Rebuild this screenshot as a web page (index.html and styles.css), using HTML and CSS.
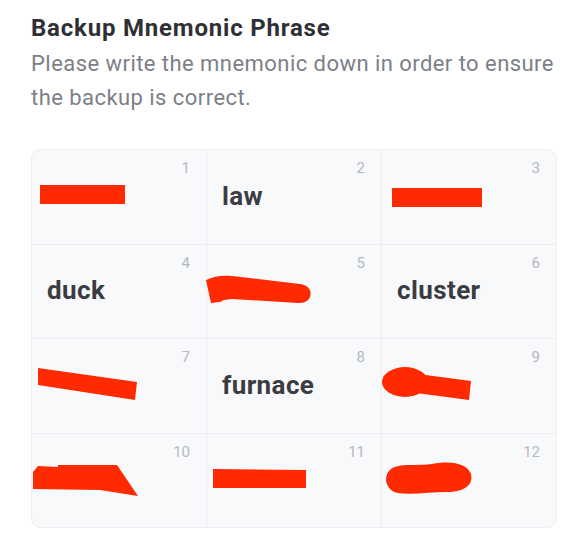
FILE: index.html
```html
<!DOCTYPE html>
<html lang="en">
<head>
<meta charset="utf-8">
<title>Backup Mnemonic Phrase</title>
<link rel="stylesheet" href="styles.css">
</head>
<body>
<main class="page">
  <h1 class="title">Backup Mnemonic Phrase</h1>
  <p class="subtitle">Please write the mnemonic down in order to ensure the backup is correct.</p>
  <div class="card-wrap">
    <div class="grid">
      <div class="cell"><span class="num">1</span><span class="word"></span></div>
      <div class="cell"><span class="num">2</span><span class="word">law</span></div>
      <div class="cell"><span class="num">3</span><span class="word"></span></div>
      <div class="cell"><span class="num">4</span><span class="word">duck</span></div>
      <div class="cell"><span class="num">5</span><span class="word"></span></div>
      <div class="cell"><span class="num">6</span><span class="word">cluster</span></div>
      <div class="cell"><span class="num">7</span><span class="word"></span></div>
      <div class="cell"><span class="num">8</span><span class="word">furnace</span></div>
      <div class="cell"><span class="num">9</span><span class="word"></span></div>
      <div class="cell"><span class="num">10</span><span class="word"></span></div>
      <div class="cell"><span class="num">11</span><span class="word"></span></div>
      <div class="cell"><span class="num">12</span><span class="word"></span></div>
    </div>
    <svg class="redact" viewBox="31 149 526 378" width="526" height="378" aria-hidden="true">
      <g fill="#ff2a00">
        <rect x="40" y="185" width="85" height="19"/>
        <rect x="392" y="188" width="90" height="19"/>
        <path d="M206 280 C214 276 222 275 232 276 L300 284 C309 285 312 291 310 297 C308 302 303 303 298 303 L232 299 L224 300 L220 302 L211 303 L209 294 Z"/>
        <polygon points="38,368 137,382 135,400 38,385"/>
        <ellipse cx="405" cy="382" rx="23" ry="15"/>
        <polygon points="418,374 471,381 469,400 416,393"/>
        <polygon points="33,472 38,466 58,467 58,465 117,465 138,496 100,490 33,489"/>
        <polygon points="213,469 306,470 306,488 213,488"/>
        <path d="M391 469 C398 463 420 466 432 464 C448 461 466 462 471 474 C474 486 462 492 448 492 C430 492 412 495 398 493 C386 491 382 476 391 469 Z"/>
      </g>
    </svg>
  </div>
</main>
</body>
</html>
```
FILE: styles.css
```css
* { box-sizing: border-box; }
html, body { margin: 0; padding: 0; background: #ffffff; }
body { font-family: Roboto, "Noto Sans", "Liberation Sans", sans-serif; }
.page { padding: 14px 20px 0 31px; }
.title {
  margin: 0;
  font-size: 24px;
  line-height: 28px;
  font-weight: 700;
  letter-spacing: 0.8px;
  color: #2f3036;
}
.subtitle {
  margin: 5px 0 0;
  font-size: 22px;
  line-height: 34px;
  font-weight: 400;
  letter-spacing: 0.45px;
  color: #7c7f87;
}
.card-wrap {
  position: relative;
  margin-top: 34px;
  width: 526px;
}
.grid {
  display: grid;
  grid-template-columns: repeat(3, 174px);
  grid-auto-rows: 93.5px;
  gap: 1px;
  background: #eceef1;
  border: 1px solid #eceef1;
  border-radius: 10px;
  overflow: hidden;
}
.cell {
  position: relative;
  display: flex;
  align-items: center;
  padding: 0 14px 2px 15px;
  background: #f8f9fb;
}
.num {
  position: absolute;
  top: 9px;
  right: 16px;
  font-size: 15px;
  line-height: 18px;
  color: #b5b8bd;
}
.word {
  font-size: 26px;
  font-weight: 700;
  letter-spacing: 0.4px;
  color: #3a3c42;
}
.redact {
  position: absolute;
  left: 0;
  top: 0;
}
```
